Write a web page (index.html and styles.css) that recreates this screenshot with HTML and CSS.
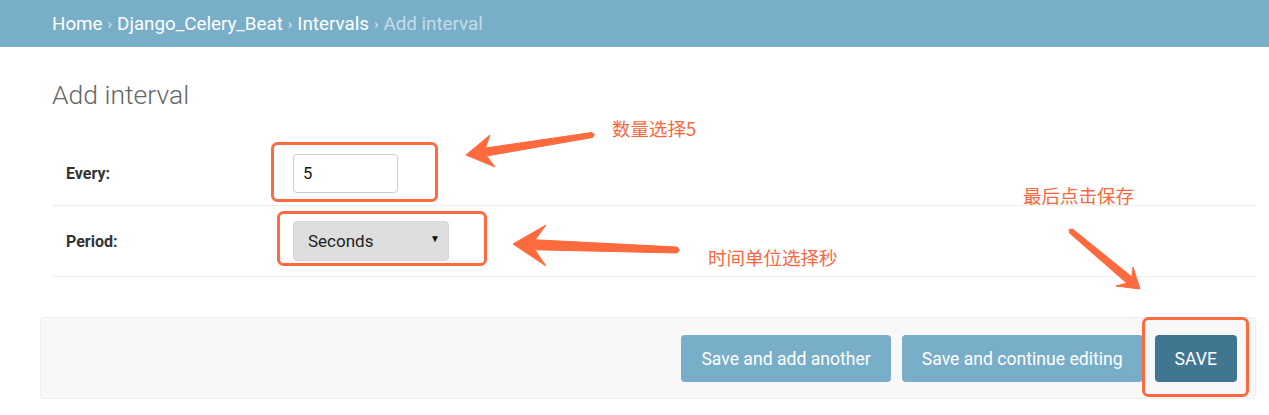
FILE: index.html
```html
<!DOCTYPE html>
<html lang="en">
<head>
<meta charset="utf-8">
<title>Add interval</title>
<link rel="stylesheet" href="styles.css">
</head>
<body>
<div class="page">
  <header class="breadcrumbs">
    <a href="#">Home</a><span class="sep">›</span><a href="#">Django_Celery_Beat</a><span class="sep">›</span><a href="#">Intervals</a><span class="sep">›</span><span class="current">Add interval</span>
  </header>
  <main class="content">
    <h1 class="title">Add interval</h1>
    <form class="form">
      <fieldset class="fieldset">
        <div class="form-row row-every">
          <label class="label" for="every">Every:</label>
          <input class="text-input" id="every" type="text" value="5">
        </div>
        <div class="form-row row-period">
          <label class="label" for="period">Period:</label>
          <div class="select-wrap">
            <select class="select" id="period"><option>Seconds</option></select>
            <span class="caret">▼</span>
          </div>
        </div>
      </fieldset>
      <div class="submit-row">
        <button type="button" class="btn">Save and add another</button>
        <button type="button" class="btn">Save and continue editing</button>
        <button type="button" class="btn btn-default">SAVE</button>
      </div>
    </form>
  </main>

  <svg class="annotations" width="1269" height="415" viewBox="0 0 1269 415" aria-hidden="true">
    <g fill="none" stroke="#fd6a3e" stroke-width="3">
      <rect x="272.5" y="143.5" width="164" height="57" rx="5"/>
      <rect x="278.5" y="212.5" width="207" height="52" rx="5"/>
      <rect x="1143.5" y="318.5" width="104" height="77" rx="5"/>
    </g>
    <g fill="#fd6a3e" stroke="#fd6a3e" stroke-width="1" stroke-linejoin="round">
      <path d="M466,155 L490,135 L485.4,148 L591.6,132.5 L594.5,134.6 L592.4,137.5 L486.6,156 L495,167 Z"/>
      <path d="M513,244 L546,225 L535.2,239.8 L677.1,247 L679.5,250.1 L676.9,253 L534.8,249.8 L546,266 Z"/>
      <path d="M1140,289 L1133,267 L1131.9,276.9 L1072.6,229.1 L1069.1,229.4 L1069.4,232.9 L1126.7,283.1 L1116,286 Z"/>
    </g>
  </svg>
  <span class="note note-1">数量选择5</span>
  <span class="note note-2">时间单位选择秒</span>
  <span class="note note-3">最后点击保存</span>
</div>
</body>
</html>
```

FILE: styles.css
```css
* { box-sizing: border-box; }
html, body { margin: 0; padding: 0; background: #fff; }
body {
  font-family: Roboto, "Liberation Sans", Arial, sans-serif;
  color: #333;
  width: 1269px;
  height: 415px;
  overflow: hidden;
}
.page { position: relative; width: 1269px; height: 415px; }

.breadcrumbs {
  height: 47px;
  background: #79aec8;
  padding: 0 0 0 52px;
  display: flex;
  align-items: center;
  font-size: 18.8px;
  color: #c4dce8;
}
.breadcrumbs a { color: #fff; text-decoration: none; }
.breadcrumbs .sep { color: #d6e7f0; margin: 0 5px; font-size: 15px; }
.breadcrumbs .current { color: #c4dce8; }

.content { padding: 0 13px 0 40px; }
.title {
  margin: 31px 0 0 12px;
  font-size: 26.5px;
  font-weight: 300;
  color: #666;
  line-height: 34px;
}
.form { margin-top: 23px; }
.fieldset { border: 0; margin: 0 0 0 12px; padding: 0; }
.form-row {
  display: flex;
  align-items: center;
  border-bottom: 1px solid #eee;
  padding-left: 14px;
}
.row-every { height: 71px; padding-top: 6px; }
.row-period { height: 71px; }
.label {
  width: 227px;
  font-weight: 700;
  font-size: 16px;
  color: #333;
}
.text-input {
  width: 105px;
  height: 39px;
  border: 1px solid #ccc;
  border-radius: 4px;
  padding: 0 9px;
  font: 16.5px Roboto, "Liberation Sans", Arial, sans-serif;
  color: #111;
  background: #fff;
}
.select-wrap { position: relative; width: 156px; height: 40px; }
.select {
  -webkit-appearance: none;
  appearance: none;
  width: 156px;
  height: 40px;
  border: 1px solid #d4d4d4;
  border-radius: 4px;
  background: #dedede;
  padding: 0 14px;
  font: 17px Roboto, "Liberation Sans", Arial, sans-serif;
  color: #222;
}
.caret {
  position: absolute;
  right: 9px;
  top: 12px;
  font-size: 10px;
  color: #111;
  pointer-events: none;
}

.submit-row {
  margin-top: 40px;
  height: 82px;
  background: #f8f8f8;
  border: 1px solid #eee;
  border-radius: 4px;
  display: flex;
  justify-content: flex-end;
  align-items: center;
  gap: 11px;
  padding: 1px 18px 0 0;
}
.btn {
  height: 47px;
  border: 0;
  border-radius: 4px;
  background: #79aec8;
  color: #fff;
  font: 17.6px Roboto, "Liberation Sans", Arial, sans-serif;
  padding: 0 20px;
}
.btn-default { background: #417690; padding: 0 20px; margin-left: 1px; }

.annotations { position: absolute; left: 0; top: 0; pointer-events: none; }
.note {
  position: absolute;
  font-family: "Noto Sans CJK SC", sans-serif;
  font-size: 18.5px;
  color: #f7683f;
  line-height: 1;
  white-space: nowrap;
}
.note-1 { left: 612px; top: 119px; }
.note-2 { left: 708px; top: 248px; }
.note-3 { left: 1023px; top: 186px; }
```
